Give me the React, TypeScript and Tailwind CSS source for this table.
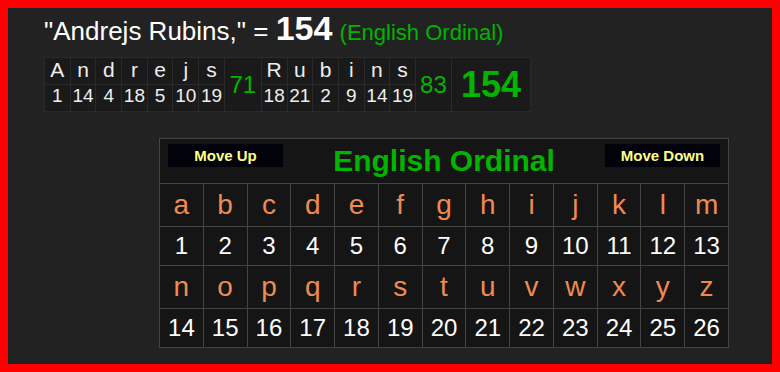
import { Fragment } from 'react';

const FIRST: [string, number][] = [
  ['A', 1],
  ['n', 14],
  ['d', 4],
  ['r', 18],
  ['e', 5],
  ['j', 10],
  ['s', 19],
];
const LAST: [string, number][] = [
  ['R', 18],
  ['u', 21],
  ['b', 2],
  ['i', 9],
  ['n', 14],
  ['s', 19],
];

const ALPHABET = 'abcdefghijklmnopqrstuvwxyz'.split('');

function LetterColumn({ letter, value }: { letter: string; value: number }) {
  return (
    <div className="flex flex-col gap-px">
      <div className="w-[24.7px] h-[26px] bg-[#1a1a1a] flex justify-center pt-[1px] text-[21px] leading-none text-[#eeeeee]">
        {letter}
      </div>
      <div className="w-[24.7px] h-[26px] bg-[#1a1a1a] flex justify-center pt-[1px] text-[19px] leading-none text-[#eeeeee]">
        {value}
      </div>
    </div>
  );
}

function WordBreakdown() {
  return (
    <div className="inline-flex gap-px p-px bg-[#2a2a2a] mt-[12px]">
      {FIRST.map(([l, v], i) => (
        <LetterColumn key={'f' + i} letter={l} value={v} />
      ))}
      <div className="w-[36px] bg-[#1a1a1a] flex items-center justify-center text-[24px] leading-none text-[#00b400]">
        71
      </div>
      {LAST.map(([l, v], i) => (
        <LetterColumn key={'l' + i} letter={l} value={v} />
      ))}
      <div className="w-[35px] bg-[#1a1a1a] flex items-center justify-center text-[24px] leading-none text-[#00b400]">
        83
      </div>
      <div className="w-[78px] bg-[#1a1a1a] flex items-center justify-center text-[36px] font-bold leading-none text-[#00b400]">
        154
      </div>
    </div>
  );
}

function CipherChart() {
  const rows = [ALPHABET.slice(0, 13), ALPHABET.slice(13)];
  return (
    <div className="ml-[115px] mt-[26px] w-[570px] grid grid-cols-[repeat(13,minmax(0,1fr))] gap-px p-px bg-[#444444]">
      {/* header */}
      <div className="col-span-full h-[44px] bg-[#151515] flex items-start justify-between px-[8px]">
        <button className="mt-[5px] w-[115px] h-[23px] bg-[#02020a] text-[#ffff88] text-[15px] font-bold leading-none">
          Move Up
        </button>
        <div className="self-center text-[30px] font-bold leading-none text-[#00b400]">English Ordinal</div>
        <button className="mt-[5px] w-[115px] h-[23px] bg-[#02020a] text-[#ffff88] text-[15px] font-bold leading-none">
          Move Down
        </button>
      </div>
      {rows.map((row, r) => (
        <Fragment key={'row' + r}>
          {row.map((ch) => (
            <div
              key={'c' + ch}
              className="h-[42px] bg-[#151515] flex items-center justify-center text-[28px] leading-none text-[#f08a50]"
            >
              {ch}
            </div>
          ))}
          {row.map((ch, i) => (
            <div
              key={'n' + ch}
              className="h-[38px] bg-[#151515] flex items-center justify-center text-[24px] leading-none text-white"
            >
              {r * 13 + i + 1}
            </div>
          ))}
        </Fragment>
      ))}
    </div>
  );
}

export default function App() {
  return (
    <div
      className="w-[780px] h-[372px] border-8 border-[#ff0000] bg-[#222222] pl-[36px] pt-[3px]"
      style={{ fontFamily: '"Liberation Sans", Arial, sans-serif' }}
    >
      <div className="text-[26px] leading-none text-white whitespace-nowrap">
        "Andrejs Rubins," = <span className="text-[34px] font-bold">154</span>{' '}
        <span className="text-[22px] text-[#00b400]">(English Ordinal)</span>
      </div>
      <WordBreakdown />
      <CipherChart />
    </div>
  );
}
